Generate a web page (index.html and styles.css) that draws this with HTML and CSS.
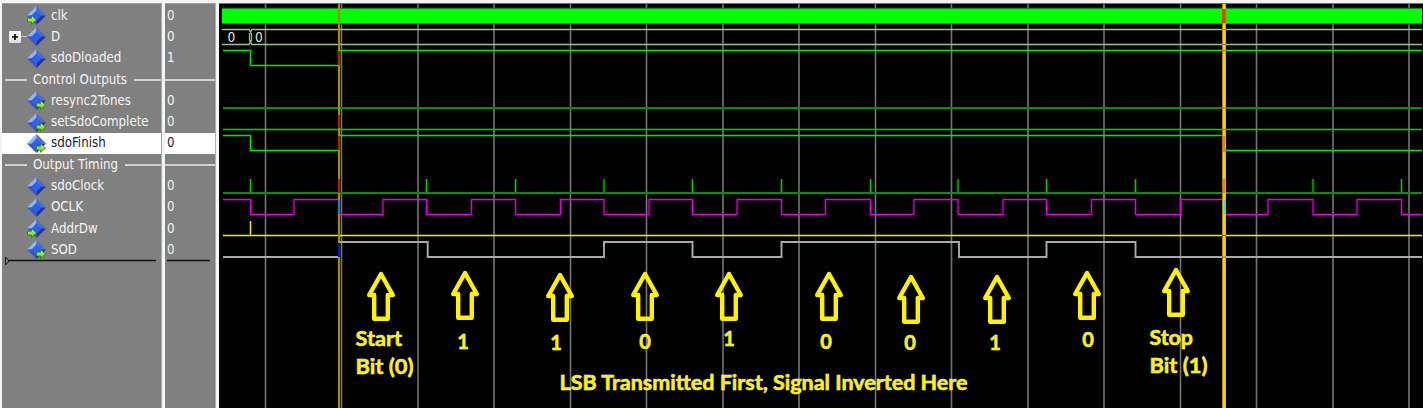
FILE: index.html
```html
<!DOCTYPE html>
<html lang="en">
<head>
<meta charset="utf-8">
<title>Wave</title>
<link rel="stylesheet" href="styles.css">
</head>
<body>
<svg class="defs" width="0" height="0">
  <defs>
    <linearGradient id="arrowFill" x1="0" y1="0" x2="0" y2="1"><stop offset="0" stop-color="#c8ff70"/><stop offset="1" stop-color="#4fd800"/></linearGradient>
    <symbol id="gem" viewBox="0 0 19 19">
      <path d="M9.5 0 0 9.5h5l4.500-4.500z" fill="#8db6ff"/>
      <path d="M9.500 0 19 9.500h-5L9.500 5z" fill="#456fd8"/>
      <path d="M0 9.500 9.500 19v-5L5 9.500z" fill="#3c55c4"/>
      <path d="M19 9.500 9.500 19v-5L14 9.500z" fill="#2a2f9c"/>
      <path d="M9.500 4.500 14.500 9.500 9.500 14.500 4.500 9.500z" fill="#2a62f0"/>
    </symbol>
    <symbol id="port" viewBox="0 0 10 10">
      <path d="M.5 3.200H4.500V.6L9.500 5 4.500 9.400V7H.5z" fill="url(#arrowFill)" stroke="#2c7018" stroke-width=".7"/>
    </symbol>
  </defs>
</svg>
<main class="wave-window">
  <section class="names">
    <div class="row"><span class="icon in"><svg class="gem"><use href="#gem"/></svg><svg class="port"><use href="#port"/></svg></span><span class="label">clk</span></div>
    <div class="row expandable"><span class="expander"><svg viewBox="0 0 12 12"><path d="M6 3v6M3 6h6" stroke="#000" stroke-width="1.600"/></svg></span><span class="branch"></span><span class="icon"><svg class="gem"><use href="#gem"/></svg></span><span class="label">D</span></div>
    <div class="row"><span class="icon"><svg class="gem"><use href="#gem"/></svg></span><span class="label">sdoDloaded</span></div>
    <div class="row divider"><span>Control Outputs</span></div>
    <div class="row"><span class="icon out"><svg class="gem"><use href="#gem"/></svg><svg class="port"><use href="#port"/></svg></span><span class="label">resync2Tones</span></div>
    <div class="row"><span class="icon out"><svg class="gem"><use href="#gem"/></svg><svg class="port"><use href="#port"/></svg></span><span class="label">setSdoComplete</span></div>
    <div class="row selected"><span class="icon out"><svg class="gem"><use href="#gem"/></svg><svg class="port"><use href="#port"/></svg></span><span class="label">sdoFinish</span></div>
    <div class="row divider"><span>Output Timing</span></div>
    <div class="row"><span class="icon"><svg class="gem"><use href="#gem"/></svg></span><span class="label">sdoClock</span></div>
    <div class="row"><span class="icon"><svg class="gem"><use href="#gem"/></svg></span><span class="label">OCLK</span></div>
    <div class="row"><span class="icon in"><svg class="gem"><use href="#gem"/></svg><svg class="port"><use href="#port"/></svg></span><span class="label">AddrDw</span></div>
    <div class="row"><span class="icon out"><svg class="gem"><use href="#gem"/></svg><svg class="port"><use href="#port"/></svg></span><span class="label">SOD</span></div>
    <svg class="end-mark" viewBox="0 0 159 10"><path d="M3.500 1v8L7 5z" fill="none" stroke="#111"/><path d="M6 4.500H154" stroke="#111" stroke-width="1.300"/></svg>
  </section>
  <section class="values">
    <div class="row">0</div><div class="row">0</div><div class="row">1</div><div class="row rule"></div>
    <div class="row">0</div><div class="row">0</div><div class="row selected">0</div><div class="row rule"></div>
    <div class="row">0</div><div class="row">0</div><div class="row">0</div><div class="row">0</div>
    <svg class="end-mark" viewBox="0 0 50 10"><path d="M2 4.500H45" stroke="#111" stroke-width="1.300"/></svg>
  </section>
  <section class="waves">
    <svg width="1204" height="405" viewBox="219 3 1204 405">
      <path class="grid" d="M265.500 3V408M341.500 3V408M418 3V408M494 3V408M570.500 3V408M646.500 3V408M723 3V408M799 3V408M875.500 3V408M951.500 3V408M1028 3V408M1104 3V408M1180.500 3V408M1256.500 3V408M1333 3V408M1409 3V408"/>
      <path d="M219 3.500H1423" stroke="#707070"/>
      <rect x="222" y="8" width="1200" height="16" fill="#009600"/>
      <rect x="222" y="9" width="1200" height="14" fill="#00ff00"/>

      <g class="bus"><path d="M222 29.500H249L251.500 34V40L249 44.500H222M1422 29.500H252L249.500 34V40L252 44.500H1422"/></g>
      <text class="bus-text" x="227.500" y="42">0</text>
      <text class="bus-text" x="255" y="42">0</text>

      <g class="green">
        <path class="halo" d="M223 50.500H250.500V65.500H339V50.500H1422M223 135.500H250.500V150.500H339V135.500H1224V150.500H1422"/>
        <path d="M223 50.500H250.500V65.500H339V50.500H1422M223 135.500H250.500V150.500H339V135.500H1224V150.500H1422"/>
        <path class="halo" d="M223 129.500H1422"/><path class="mid" d="M223 129.500H1422"/>
        <path class="base" d="M223 108H1422M223 193H1422"/>
        <path class="halo" d="M250.500 179V192M426.500 179V192M515.500 179V192M604 179V192M692.500 179V192M781.500 179V192M870.500 179V192M958 179V192M1046.500 179V192M1135.500 179V192M1313 179V192M1401.500 179V192"/>
        <path class="mid" d="M250.500 179V192M426.500 179V192M515.500 179V192M604 179V192M692.500 179V192M781.500 179V192M870.500 179V192M958 179V192M1046.500 179V192M1135.500 179V192M1313 179V192M1401.500 179V192"/>
      </g>
      <g class="magenta">
        <path class="halo" d="M223 199.500H250.500V214.500H294V199.500H339V214.500H383V199.500H426.500V214.500H471.500V199.500H515.500V214.500H560.500V199.500H604V214.500H649V199.500H692.500V214.500H737V199.500H781.500V214.500H825.500V199.500H870.500V214.500H914V199.500H958V214.500H1003V199.500H1046.500V214.500H1091.500V199.500H1135.500V214.500H1180.500V199.500H1224V214.500H1268V199.500H1313V214.500H1357V199.500H1401.500V214.500H1422"/>
        <path d="M223 199.500H250.500V214.500H294V199.500H339V214.500H383V199.500H426.500V214.500H471.500V199.500H515.500V214.500H560.500V199.500H604V214.500H649V199.500H692.500V214.500H737V199.500H781.500V214.500H825.500V199.500H870.500V214.500H914V199.500H958V214.500H1003V199.500H1046.500V214.500H1091.500V199.500H1135.500V214.500H1180.500V199.500H1224V214.500H1268V199.500H1313V214.500H1357V199.500H1401.500V214.500H1422"/>
      </g>
      <g class="yellow">
        <path class="halo" d="M223 235.500H1422M250.500 221V235"/>
        <path d="M223 235.500H1422M250.500 221V235"/>
      </g>
      <path class="sod" d="M223 257H339V242H427.700V257H604V242H692.500V257H781.500V242H959V257H1046.500V242H1135.500V257H1422"/>

      <path d="M339 4V408" stroke="#ad8a00" stroke-width="2"/>
      <path d="M339 9V23" stroke="#c07800" stroke-width="2"/>
      <path d="M339 51V65M339 115V128M339 136V150M339 179V193" stroke="#b51e00" stroke-width="2"/>
      <path d="M339 200V214" stroke="#0090a8" stroke-width="2"/>
      <path d="M339 243V257" stroke="#0018b8" stroke-width="2"/>
      <path d="M1224 4V408" stroke="#ae8900" stroke-width="4"/>
      <path d="M1224.300 4V408" stroke="#ffd200" stroke-width="2.600"/>
      <path d="M1224 9V23" stroke="#ff3200" stroke-width="3.500"/>
      <path d="M1222 50.500H1226M1222 129.500H1226M1222 108H1226M1224 136V151H1226M1224 179V193" fill="none" stroke="#ff6000" stroke-width="1.600"/>
      <path d="M1222 29.500H1226M1222 44.500H1226M1222 257H1226" stroke="#7568a0"/>
      <path d="M1222 235.500H1226" stroke="#554800"/>
      <path d="M1224.500 200V214" stroke="#30e0c8" stroke-width="1.500"/>

      <g class="arrows">
        <path transform="translate(381 271)" d="M-6.800 47.800V24H-11.800L0 3L11.800 24H6.800V47.800Z"/>
        <path transform="translate(465 270)" d="M-6.800 47.800V24H-11.800L0 3L11.800 24H6.800V47.800Z"/>
        <path transform="translate(560 272)" d="M-6.800 47.800V24H-11.800L0 3L11.800 24H6.800V47.800Z"/>
        <path transform="translate(645 271)" d="M-6.800 47.800V24H-11.800L0 3L11.800 24H6.800V47.800Z"/>
        <path transform="translate(729 271)" d="M-6.800 47.800V24H-11.800L0 3L11.800 24H6.800V47.800Z"/>
        <path transform="translate(829 271)" d="M-6.800 47.800V24H-11.800L0 3L11.800 24H6.800V47.800Z"/>
        <path transform="translate(911 274)" d="M-6.800 47.800V24H-11.800L0 3L11.800 24H6.800V47.800Z"/>
        <path transform="translate(997 274)" d="M-6.800 47.800V24H-11.800L0 3L11.800 24H6.800V47.800Z"/>
        <path transform="translate(1087 270)" d="M-6.800 47.800V24H-11.800L0 3L11.800 24H6.800V47.800Z"/>
        <path transform="translate(1176 267)" d="M-6.800 47.800V24H-11.800L0 3L11.800 24H6.800V47.800Z"/>
      </g>
      <g class="notes">
        <text x="355.500" y="346" textLength="46.500" lengthAdjust="spacingAndGlyphs">Start</text>
        <text x="355.500" y="374" textLength="58" lengthAdjust="spacingAndGlyphs">Bit (0)</text>
        <text class="bit" x="463" y="349">1</text>
        <text class="bit" x="556" y="350">1</text>
        <text class="bit" x="645" y="349">0</text>
        <text class="bit" x="729" y="346">1</text>
        <text class="bit" x="826" y="349">0</text>
        <text class="bit" x="910" y="350">0</text>
        <text class="bit" x="995" y="350">1</text>
        <text class="bit" x="1088" y="347">0</text>
        <text x="1149.500" y="345" textLength="43.500" lengthAdjust="spacingAndGlyphs">Stop</text>
        <text x="1149.500" y="373" textLength="58" lengthAdjust="spacingAndGlyphs">Bit (1)</text>
        <text x="559.500" y="390" textLength="408" lengthAdjust="spacingAndGlyphs">LSB Transmitted First, Signal Inverted Here</text>
      </g>
    </svg>
  </section>
</main>
</body>
</html>
```
FILE: styles.css
```css
* { box-sizing: border-box; }
body { margin: 0; background: #f4f4f4; overflow: hidden; }
.defs { position: absolute; }
.wave-window {
  display: flex;
  width: 1423px;
  height: 408px;
  padding: 3px 0 0 2px;
  font: 13.2px/19px "DejaVu Sans Condensed", "DejaVu Sans", sans-serif;
  font-stretch: condensed;
  letter-spacing: 0;
  color: #f4f4f4;
}
.names, .values { background: #808080; padding-top: 1px; border-top: 1px solid #a0a0a0; }
.names { width: 160px; border-right: 1px solid #a8a8a8; margin-right: 3px; }
.values { width: 50px; margin-right: 4px; box-shadow: 1px 0 #b0b0b0; }
.row { height: 21.3px; display: flex; align-items: center; white-space: nowrap; }
.label, .divider span { line-height: 19px; padding-bottom: 1px; }
.names .row { padding-left: 25px; }
.values .row { padding: 0 0 1px 2px; }
.row.selected { background: #fff; color: #1a1a30; }
.names .row.expandable { padding-left: 7px; }
.expander { width: 12px; height: 12px; background: linear-gradient(#fff, #d8dce4); border-radius: 1px; }
.expander svg { display: block; width: 12px; height: 12px; }
.branch { width: 6px; height: 1px; background: #c8c8c8; }
.icon { position: relative; width: 19px; height: 19px; margin-right: 5px; }
.gem { display: block; width: 19px; height: 19px; }
.port { position: absolute; width: 10px; height: 10px; top: 9px; }
.in .port { left: 0; }
.out .port { right: 0; }
.names .divider { padding-left: 3px; }
.divider::before { content: ""; width: 22px; height: 2px; margin-right: 6px; background: #d0d0d0; }
.divider::after { content: ""; flex: 1; height: 2px; margin-left: 7px; background: #d0d0d0; }
.values .rule { padding: 0; }
.rule::before { content: ""; width: 100%; height: 2px; background: #d0d0d0; }
.end-mark { display: block; height: 10px; margin-top: -5px; }
.names .end-mark { width: 159px; }
.values .end-mark { width: 50px; }
.waves { width: 1204px; background: #000; }
.waves svg { display: block; }
.grid { stroke: #757575; stroke-width: 1.6; }
.bus path { fill: none; stroke: #91c891; stroke-width: 1.3; }
.bus-text { font-size: 13.5px; fill: #e8e8e0; }
.green path, .magenta path, .yellow path { fill: none; stroke-width: 1; }
.green path { stroke: #00e800; }
.green .mid { stroke: #00cc00; }
.green .base { stroke: #009400; stroke-width: 2; }
.magenta path { stroke: #e000e0; }
.yellow path { stroke: #eeea00; }
.green .halo, .magenta .halo, .yellow .halo { stroke-width: 3; opacity: .27; }
.sod { fill: none; stroke: #aaa; stroke-width: 1.9; }
.arrows path { fill: none; stroke: #fff200; stroke-width: 4.4; stroke-linejoin: round; }
.notes { font: bold 20px Lato, sans-serif; font-stretch: normal; letter-spacing: 0; fill: #fff200; stroke: #fff; stroke-width: .5; paint-order: stroke; }
.bit { text-anchor: middle; }
```
